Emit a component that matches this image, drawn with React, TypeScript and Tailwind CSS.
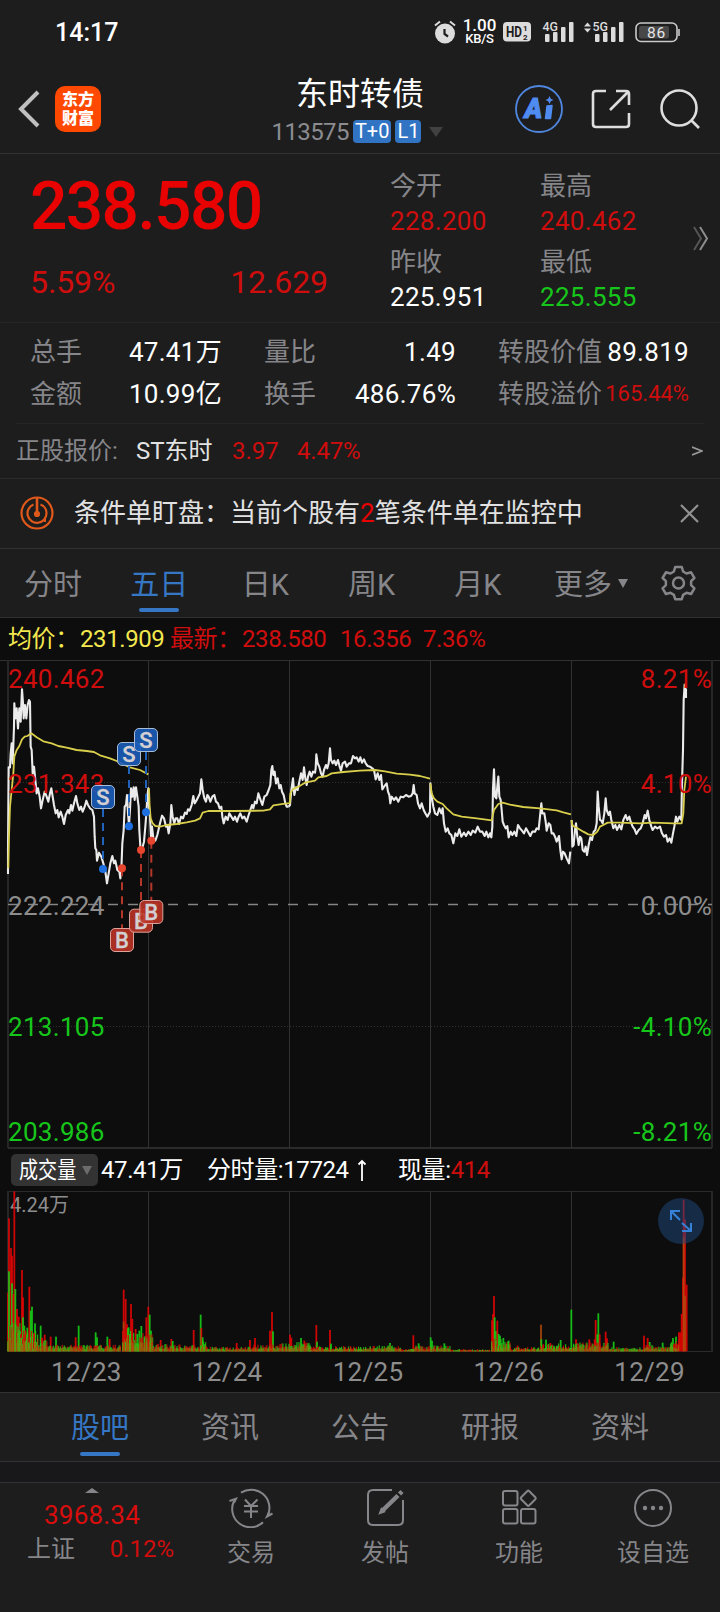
import React from "react";

/* ─────────────────────────────────────────
   Data
───────────────────────────────────────── */
type Line = { tx: number; ty: number; points: string };

// Traced in third-pixel units, each run has its own origin on the chart
const priceLines: Line[] = [
    {
        tx: 0,
        ty: -10,
        points:
            "24,672 24,600 26,352 30,352 32,310 35,280 38,340 42,230 43,160 46,205 50,175 54,235 58,175 62,215 66,118 69,160 71,205 75,165 79,205 83,165 87,150 90,155 92,290 95,300 98,370 102,350 106,390 110,430 114,415 119,440 123,475 128,450 134,425 140,440 145,455 150,430 154,415 158,440 162,465 167,490 172,480 176,502 182,485 187,500 192,522 197,495 204,480 208,490 213,465 217,482 222,460 228,438 232,460 238,480 243,470 248,485 254,470 259,452 264,465 270,475 277,480 282,500 284,560 286,595 289,600 291,632 297,608 304,620 310,640 316,665 321,700 326,670 331,640 337,618 342,640 346,632 352,660 358,665 361,685 364,660 367,580 371,540 374,470 378,465 381,435 384,490 387,525 390,480 393,415 397,440 401,412 404,450 408,412 412,440 416,470 418,540 421,590 424,600 428,590 432,575 436,530 439,490 442,440 445,415 447,470 450,500 453,560 456,530 460,565 466,572 472,555 480,520 486,497 492,505 498,530 502,525 506,550 511,520 514,465 518,500 523,520 527,505 532,505 537,522 543,500 549,505 555,488 560,492 564,478 569,482 575,465 580,438 584,460 589,452 595,440 600,430 604,388 608,420 613,445 618,455 622,435 626,440 631,455 637,440 643,435 648,455 654,460 659,475 664,470 667,500 671,520 677,500 683,510 688,490 694,500 700,510 705,500 711,515 716,500 721,490 727,505 733,500 740,515 745,498 751,480 756,465 760,475 765,455 770,460 775,430 780,445 787,465 793,440 800,435 806,420 811,405 814,360 817,348 820,375 824,365 828,400 833,385 838,415 842,405 846,425 851,435 856,460 860,470 866,470",
    },
    {
        tx: 280,
        ty: 40,
        points:
            "26,320 30,315 34,270 39,235 43,285 48,262 53,270 58,245 63,220 68,240 72,202 76,235 80,255 84,230 89,215 94,230 99,215 105,218 107,205 109,163 113,190 118,200 123,220 128,230 132,210 138,195 142,205 146,190 150,145 153,180 158,190 163,182 168,195 174,180 179,200 183,212 188,190 195,185 200,200 207,190 213,190 219,168 225,175 230,172 236,185 241,172 246,188 252,178 257,190 263,198 270,200 277,205 282,210 287,238 293,220 298,240 303,225 307,268 312,260 320,250 324,275 328,285 331,310 335,290 342,300 348,292 355,305 362,290 370,292 378,285 386,290 393,288 398,280 401,255 404,280 410,285 414,310 420,325 425,310 431,330 436,340 442,350 450,335 451,250 455,290 460,320 465,340 472,345 478,325 484,340 488,325 492,370 497,395 503,385 508,400 514,405 520,430 526,400 532,408 538,388 544,410 552,398 558,408 565,395 572,405 578,392 586,398 593,380 600,395 607,395 614,408 619,395 625,412 630,400 634,412 637,380 639,265 642,208 645,290 649,295 652,260 655,230 658,290 662,300 665,330 668,365 672,375 677,385 682,378 686,412 692,395 697,405 703,395 709,408 714,375 720,385 726,392 732,400 738,385 744,395 751,408 757,395 765,395 770,385 776,388 780,350 784,310 787,340 793,340 797,365 800,392 806,370 811,375 815,400 820,400 825,410 830,425 837,408 841,450 845,478 849,455 854,460 860,475 867,490 871,455",
    },
    {
        tx: 540,
        ty: -10,
        points:
            "95,510 97,590 101,585 105,540 108,520 112,560 116,585 120,560 124,565 128,600 133,605 137,590 141,615 146,585 151,562 156,570 161,545 166,540 170,520 173,425 176,470 180,510 184,512 188,520 193,490 197,445 200,480 206,495 210,485 214,510 220,535 226,525 231,540 238,525 244,538 250,510 257,495 262,510 268,500 272,515 278,530 284,538 289,552 296,540 302,535 308,520 314,495 318,505 323,482 328,510 334,530 338,540 345,530 352,535 360,530 366,550 372,560 378,555 383,575 389,565 394,578 399,550 403,530 408,500 412,515 418,500 424,510 426,400 429,300 431,150 434,104 436,140 438,118 438,144",
    },
];

const averageLines: Line[] = [
    { tx: 0, ty: -10, points: "25,655 27,560 30,470 35,420 40,370 43,320 50,300 58,288 66,268 74,260 82,258 94,250 110,262 130,274 155,280 175,288 200,293 230,300 260,303 282,306 300,316 330,325 350,333 390,352 420,360 445,373" },
    { tx: 0, ty: -10, points: "447,415 449,470 452,505 458,520 466,528 480,530 500,525 530,522 560,517 585,512 600,505 608,488 625,483 700,483 790,482 810,478 820,466 855,461 868,460" },
    { tx: 280, ty: 40, points: "29,312 31,280 38,268 55,260 75,248 90,245 105,242 115,232 140,228 155,220 190,216 240,212 285,210 315,214 350,221 390,224 420,228 450,236" },
    { tx: 280, ty: 40, points: "451,250 455,280 462,295 472,305 488,312 500,325 520,343 545,350 590,355 635,361 642,330 655,312 668,308 690,314 730,321 780,325 830,331 850,337 873,343" },
    { tx: 540, ty: -10, points: "94,510 96,522 99,528 110,533 130,545 145,553 160,555 172,545 180,530 190,525 203,518 240,518 300,520 340,518 400,520 425,520 430,490 433,420 438,380" },
];

// [x, top, color] in third-pixel units, baseline at 481
const volumeSpikes: [number, number, "r" | "g" | "m"][] = [
    [24, 305, "r"], [27, 82, "r"], [33, 171, "r"], [36, 194, "r"], [27, 241, "g"], [36, 277, "g"], [40, 310, "r"], [43, 1, "r"], [46, 294, "g"], [51, 354, "r"], [56, 377, "r"], [60, 421, "g"], [66, 237, "r"], [69, 319, "r"], [69, 379, "g"], [73, 404, "g"], [79, 425, "r"], [82, 410, "g"], [88, 287, "r"], [92, 359, "g"], [96, 347, "g"], [101, 427, "r"], [105, 397, "g"], [122, 404, "g"], [126, 440, "r"], [134, 431, "r"], [152, 437, "r"], [168, 437, "g"], [227, 439, "r"], [236, 404, "g"], [287, 424, "g"], [291, 439, "g"], [322, 437, "g"], [329, 444, "r"],
    [371, 296, "r"], [377, 324, "r"], [371, 392, "m"], [381, 400, "r"], [386, 409, "g"], [393, 339, "r"], [397, 384, "r"], [393, 430, "g"], [407, 414, "r"], [412, 429, "g"], [418, 419, "g"], [424, 405, "g"], [433, 439, "g"], [439, 379, "r"], [445, 347, "r"], [449, 371, "g"], [453, 419, "g"], [457, 439, "g"], [482, 447, "r"], [514, 444, "r"], [518, 450, "g"], [581, 417, "r"], [602, 371, "g"], [604, 411, "r"], [608, 439, "g"], [710, 456, "r"], [750, 447, "r"], [765, 441, "r"], [810, 419, "r"], [816, 363, "r"], [819, 421, "g"], [870, 431, "r"], [874, 440, "r"], [903, 441, "g"], [913, 449, "r"], [949, 402, "r"], [951, 452, "g"], [990, 417, "r"], [993, 458, "g"],
    [1170, 456, "g"], [1240, 433, "r"], [1256, 457, "g"], [1292, 439, "g"], [1296, 449, "g"], [1333, 457, "g"], [1476, 388, "r"], [1479, 369, "r"], [1482, 315, "r"], [1484, 379, "g"], [1488, 420, "g"], [1492, 389, "r"], [1496, 429, "g"], [1500, 434, "g"], [1510, 441, "g"], [1526, 449, "g"], [1553, 464, "r"], [1623, 401, "m"], [1624, 445, "g"], [1638, 446, "g"], [1651, 456, "r"], [1682, 447, "g"], [1714, 356, "g"], [1728, 445, "r"], [1768, 445, "r"], [1784, 445, "r"], [1787, 387, "r"], [1792, 430, "g"], [1795, 367, "g"], [1799, 430, "r"], [1817, 422, "r"], [1821, 442, "r"], [1841, 452, "g"], [1932, 434, "r"], [1943, 441, "r"], [1949, 453, "g"], [1988, 455, "g"], [2019, 441, "g"], [2028, 437, "g"], [2037, 424, "r"], [2041, 424, "r"], [2045, 369, "r"], [2049, 260, "r"], [2051, 26, "r"], [2055, 86, "r"], [2060, 281, "r"], [2051, 139, "m"], [2055, 314, "m"],
];

// [from x, to x, typical height] of the low volume between the spikes
const volumeFloor: [number, number, number][] = [
    [22, 60, 90], [60, 112, 66], [112, 140, 36], [140, 360, 20], [366, 400, 76], [400, 455, 56], [455, 475, 34], [475, 600, 22], [600, 620, 36], [620, 760, 14], [760, 880, 24], [880, 930, 28], [930, 1100, 16], [1100, 1200, 18], [1200, 1240, 8], [1240, 1350, 18], [1350, 1470, 7], [1474, 1530, 38], [1530, 1620, 13], [1620, 1720, 24], [1720, 1825, 28], [1825, 1930, 13], [1930, 1960, 22], [1960, 2010, 14], [2010, 2036, 30],
];

const VOLUME_COLORS = { r: "#e30404", g: "#16cc16", m: "#b0480c" };

function buildFloor() {
    const bars: { x: number; h: number; color: string }[] = [];
    let seed = 7;
    const rand = () => {
        seed = (seed * 16807) % 2147483647;
        return seed / 2147483647;
    };
    volumeFloor.forEach(([from, to, level]) => {
        for (let x = from; x < to; x += 3) {
            const tall = level * (0.35 + rand() * 0.65);
            const short = tall * (0.3 + rand() * 0.5);
            bars.push({ x, h: tall, color: rand() > 0.5 ? "#cf0e06" : "#24c914" });
            bars.push({ x, h: short, color: rand() > 0.4 ? "#a8580a" : "#6f940e" });
        }
    });
    return bars;
}

const floorBars = buildFloor();

const dayLines = [148.5, 289.5, 430.5, 571.5];

const markers = [
    { type: "S", x: 103, y: 137, dot: 209 },
    { type: "S", x: 129, y: 94, dot: 166.3 },
    { type: "S", x: 146, y: 80, dot: 152.3 },
    { type: "B", x: 122, y: 280, dot: 208.3 },
    { type: "B", x: 141, y: 260.7, dot: 190 },
    { type: "B", x: 151.3, y: 252, dot: 180.7 },
];

/* ─────────────────────────────────────────
   Status bar
───────────────────────────────────────── */
function Signal({ label, arrows }: { label: string; arrows?: boolean }) {
    return (
        <svg width="42" height="24" viewBox="0 0 42 24" fill="#dcdcdc">
            {arrows && <path d="M0 6.500 3.500 2.500 7 6.500zM0 8.500 3.500 12.500 7 8.500z" />}
            <text x="8.5" y="11" fontSize="13.5" fontWeight="500" textLength="15.5" lengthAdjust="spacingAndGlyphs">{label}</text>
            <rect x="11" y="14" width="4.5" height="8" rx="1" />
            <rect x="19" y="12" width="4.5" height="10" rx="1" />
            <rect x="27" y="7" width="4.5" height="15" rx="1" />
            <rect x="35" y="2" width="4.5" height="20" rx="1" />
        </svg>
    );
}

function StatusBar() {
    return (
        <div className="flex h-16 items-center pl-[55px] pr-[39px] text-white">
            <span className="pt-px text-[25px] font-medium leading-none">14:17</span>
            <div className="ml-auto flex items-center">
                <svg width="22" height="24" viewBox="0 0 22 24" fill="none">
                    <circle cx="11" cy="13.5" r="10" fill="#dcdcdc" />
                    <path d="M1 5.500 6 1.500M21 5.500 16 1.500" stroke="#dcdcdc" strokeWidth="2" />
                    <path d="M10.500 9v5l3.500 2.500" stroke="#1d1d1d" strokeWidth="2.2" />
                </svg>
                <div className="ml-[7px] flex w-[33px] flex-col items-center">
                    <span className="text-[17px] font-medium leading-[13px]">1.00</span>
                    <span className="text-[13px] font-medium leading-[13px] tracking-[-0.2px]">KB/S</span>
                </div>
                <svg className="ml-[7px]" width="28" height="20" viewBox="0 0 28 20">
                    <rect width="28" height="19.5" rx="4" fill="#dcdcdc" />
                    <text x="3" y="15" fontSize="14.5" fontWeight="700" fill="#1d1d1d" textLength="16" lengthAdjust="spacingAndGlyphs">HD</text>
                    <text x="20" y="8.5" fontSize="8" fontWeight="700" fill="#1d1d1d">1</text>
                    <text x="20" y="17.8" fontSize="8" fontWeight="700" fill="#1d1d1d">2</text>
                </svg>
                <div className="ml-[3px]"><Signal label="4G" /></div>
                <div className="ml-2"><Signal label="5G" arrows /></div>
                <svg className="ml-[9px]" width="46" height="21" viewBox="0 0 46 21" fill="none">
                    <rect x="1" y="1" width="41" height="18.5" rx="5" stroke="#c9c9c9" strokeWidth="1.6" />
                    <rect x="4" y="4" width="30" height="12.5" rx="2" fill="#484848" />
                    <path d="M44 7v7" stroke="#c9c9c9" strokeWidth="1.6" />
                    <text x="21.5" y="15.7" fontSize="15.5" fill="#e6e6e6" textAnchor="middle" letterSpacing="0.8">86</text>
                </svg>
            </div>
        </div>
    );
}

/* ─────────────────────────────────────────
   Title bar
───────────────────────────────────────── */
function Header() {
    return (
        <div className="grid h-[90px] grid-cols-[1fr_auto_1fr] items-center border-b border-[#333] pt-px">
            <div className="flex items-center pl-[18px]">
                <svg width="22" height="38" viewBox="0 0 22 38" fill="none" stroke="#c0c0c0" strokeWidth="4">
                    <path d="M20 2 3 19l17 17" />
                </svg>
                <div className="ml-[15px] flex size-[46px] flex-col items-center justify-center rounded-[10px] bg-[#ff4800] text-[16px] font-black leading-[19px] text-white">
                    <span>东方</span>
                    <span>财富</span>
                </div>
            </div>
            <div className="flex flex-col items-center pt-[5px]">
                <div className="text-[32px] leading-[40px] text-white">东时转债</div>
                <div className="flex items-center pr-[5px]">
                    <span className="text-[24px] leading-[36px] tracking-[-0.6px] text-[#8c8c90]">113575</span>
                    <span className="ml-1 rounded-[4px] bg-[#3274c4] px-[2px] text-[20px] leading-[23px] text-white">T+0</span>
                    <span className="ml-1 rounded-[4px] bg-[#3274c4] px-[2px] text-[20px] leading-[23px] text-white">L1</span>
                    <svg className="ml-2" width="14" height="10" viewBox="0 0 14 10"><path d="M0 0h14L7 10z" fill="#414141" /></svg>
                </div>
            </div>
            <div className="flex items-center justify-end pr-5">
                <svg width="48" height="48" viewBox="0 0 48 48" fill="none">
                    <circle cx="24" cy="24" r="23" stroke="#4f87e0" strokeWidth="1.8" />
                    <text x="9.5" y="33" fontSize="27" fontWeight="900" fontStyle="italic" fill="#4f8bf0" stroke="#4f8bf0">A</text>
                    <path d="m32 21 5-.5-1.500 13h-5z" fill="#4f8bf0" stroke="#4f8bf0" strokeWidth="1.5" strokeLinejoin="round" />
                    <path d="m34.500 11 1.300 2.700 2.700 1.300-2.700 1.300-1.300 2.700-1.300-2.700-2.700-1.300 2.700-1.300z" fill="#4f8bf0" />
                </svg>
                <svg className="ml-7" width="40" height="40" viewBox="0 0 40 40" fill="none" stroke="#dedede" strokeWidth="2.6">
                    <path d="M15 2H5Q2 2 2 5v30q0 3 3 3h30q3 0 3-3V24M25 2h10q3 0 3 3v11M37 3 19 21" />
                </svg>
                <svg className="ml-[29px]" width="40" height="40" viewBox="0 0 40 40" fill="none" stroke="#dedede" strokeWidth="2.6">
                    <circle cx="19" cy="19" r="17.5" />
                    <path d="m31 31 8 8" />
                </svg>
            </div>
        </div>
    );
}

/* ─────────────────────────────────────────
   Quote
───────────────────────────────────────── */
function QuoteCell({ label, value, color }: { label: string; value: string; color: string }) {
    return (
        <div className="h-[76px] w-[150px]">
            <div className="text-[26px] leading-[35px] text-[#86868a]">{label}</div>
            <div className={`text-[26px] leading-[34px] tracking-[0.3px] ${color}`}>{value}</div>
        </div>
    );
}

function Quote() {
    return (
        <div className="flex h-[169px] border-b border-[#252527]">
            <div className="flex w-[328px] flex-col pl-[30px] text-[#e80202]">
                <div className="pt-[15px] text-[66px] font-medium leading-[76px] tracking-[-1.7px]">238.580</div>
                <div className="flex justify-between pt-[17px] text-[32px] leading-[40px] tracking-[-0.1px] text-[#cf0d0d]">
                    <span>5.59%</span>
                    <span>12.629</span>
                </div>
            </div>
            <div className="ml-[62px] grid grid-cols-[150px_150px] content-start pt-[15px]">
                <QuoteCell label="今开" value="228.200" color="text-[#cf0d0d]" />
                <QuoteCell label="最高" value="240.462" color="text-[#cf0d0d]" />
                <QuoteCell label="昨收" value="225.951" color="text-white" />
                <QuoteCell label="最低" value="225.555" color="text-[#17c61b]" />
            </div>
            <svg className="ml-[2px] mt-[72px]" width="17" height="25" viewBox="0 0 17 25" fill="none" strokeWidth="2">
                <path d="m2 1 7 11.500L2 24" stroke="#555" />
                <path d="m8 1 7 11.500L8 24" stroke="#8c8c8c" />
            </svg>
        </div>
    );
}

function Stat({ label, value, className, valueClass }: { label: string; value: string; className: string; valueClass?: string }) {
    return (
        <div className={`flex items-center justify-between ${className}`}>
            <span className="text-[#86868a]">{label}</span>
            <span className={valueClass || "tracking-[0.3px] text-white"}>{value}</span>
        </div>
    );
}

function Stats() {
    return (
        <div className="flex h-[100px] flex-col pl-[30px] pt-2 text-[26px] leading-[42px]">
            <div className="flex">
                <Stat className="w-[192px]" label="总手" value="47.41万" />
                <Stat className="ml-[42px] w-[192px]" label="量比" value="1.49" />
                <Stat className="ml-[42px] w-[191px]" label="转股价值" value="89.819" />
            </div>
            <div className="flex">
                <Stat className="w-[192px]" label="金额" value="10.99亿" />
                <Stat className="ml-[42px] w-[192px]" label="换手" value="486.76%" />
                <Stat className="ml-[42px] w-[191px]" label="转股溢价" value="165.44%" valueClass="text-[22px] text-[#cf0d0d]" />
            </div>
        </div>
    );
}

function Underlying() {
    return (
        <div className="border-b border-[#2a2a2c]">
            <div className="mx-4 flex h-[55px] items-center border-t border-[#252527] pb-px text-[24px] leading-none">
                <span className="w-[120px] text-[#86868a]">正股报价:</span>
                <span className="w-[96px] text-[#e2e2e2]">ST东时</span>
                <span className="w-[65px] text-[#cf0d0d]">3.97</span>
                <span className="tracking-[-0.2px] text-[#cf0d0d]">4.47%</span>
                <svg className="ml-auto mr-[1px]" width="11" height="10" viewBox="0 0 11 10" fill="none" stroke="#999" strokeWidth="1.8">
                    <path d="m0 1 10 4-10 4" />
                </svg>
            </div>
        </div>
    );
}

function Alert() {
    return (
        <div className="flex h-[70px] items-center border-b border-[#313133] pb-px pl-5 pr-[21px]">
            <svg width="34" height="34" viewBox="0 0 34 34" fill="none" stroke="#e0591a" strokeWidth="2.2">
                <circle cx="17" cy="17" r="15.5" />
                <path d="M13.500 8.500A9.500 9.500 0 1 0 26.500 17.500 9 9 0 0 0 20.500 8.500" />
                <path d="M17 2v15" strokeWidth="2.6" />
                <circle cx="17" cy="18" r="2" fill="#e0591a" />
                <path d="M24 24.500h2" strokeWidth="3" />
            </svg>
            <span className="ml-5 text-[26px] leading-none text-[#e2e2e2]">
                条件单盯盘：当前个股有<span className="text-[#e80202]">2</span>笔条件单在监控中
            </span>
            <svg className="ml-auto" width="19" height="19" viewBox="0 0 19 19" stroke="#919191" strokeWidth="2.2">
                <path d="m1 1 17 17M18 1 1 18" />
            </svg>
        </div>
    );
}

/* ─────────────────────────────────────────
   Chart period tabs
───────────────────────────────────────── */
function PeriodTabs() {
    return (
        <div className="flex h-[69px] items-center border-b border-[#313133] text-[29px] leading-[72px] text-[#86868a]">
            {["分时", "五日", "日K", "周K", "月K"].map((tab) => (
                <div key={tab} className={`relative h-[69px] w-[106.2px] text-center ${tab === "五日" ? "text-[#3577c4]" : ""}`}>
                    {tab}
                    {tab === "五日" && <span className="absolute bottom-[6px] left-[33px] h-1 w-10 rounded-full bg-[#3577c4]" />}
                </div>
            ))}
            <span className="ml-[23px] pt-[3px]">更多</span>
            <svg className="ml-[6px] mr-auto" width="10" height="9" viewBox="0 0 10 9"><path d="M0 0h10L5 9z" fill="#86868a" /></svg>
            <svg className="mr-6" width="35" height="36" viewBox="0 0 35 36" fill="none" stroke="#86868a" strokeWidth="2.5" strokeLinejoin="round">
                <path d="M14.200 2h6.600l1.300 4.500 3.400 2 4.600-1.200 3.300 5.700-3.300 3.200v3.900l3.300 3.200-3.300 5.700-4.600-1.200-3.400 2-1.300 4.400h-6.600l-1.300-4.400-3.400-2L4.900 29l-3.300-5.700 3.300-3.200v-3.900L1.600 13l3.300-5.700 4.600 1.200 3.400-2z" />
                <circle cx="17.5" cy="18" r="5.5" />
            </svg>
        </div>
    );
}

function PriceLegend() {
    return (
        <div className="flex h-[42px] items-center whitespace-pre pl-2 text-[24px] leading-none tracking-[-0.4px] text-[#cf0d0d]">
            <span className="w-[72px] text-[#f3e84e]">均价：</span>
            <span className="w-[90px] text-[#f3e84e]">231.909</span>
            <span className="w-[72px]">最新：</span>
            <span className="w-[98px]">238.580</span>
            <span className="w-[83px]">16.356</span>
            <span>7.36%</span>
        </div>
    );
}

/* ─────────────────────────────────────────
   Price chart
───────────────────────────────────────── */
function ChartLine({ line, color, width }: { line: Line; color: string; width: number }) {
    return (
        <polyline
            points={line.points}
            transform={`translate(${line.tx} ${line.ty}) scale(0.33333)`}
            fill="none"
            stroke={color}
            strokeWidth={width}
            strokeLinejoin="round"
        />
    );
}

function PriceChart() {
    return (
        <svg className="block" width="720" height="489" viewBox="0 0 720 489">
            <g stroke="#313131" strokeWidth="1" shapeRendering="crispEdges">
                <path d="M0 .5H720" />
                <path d="M8 0V488M712 0V488" strokeWidth="2" stroke="#262626" />
                <path d="M8 488H712" strokeWidth="2" stroke="#2b2b2b" />
                {dayLines.map((x) => <path key={x} d={`M${x} 1V488`} />)}
                <path d="M8 122.500H712M8 366.500H712" strokeDasharray="1 2" />
            </g>
            <path d="M8 244.500H712" stroke="#858585" strokeWidth="1.7" strokeDasharray="10 10" />
            {priceLines.map((line, i) => <ChartLine key={i} line={line} color="#ebebeb" width={6.3} />)}
            {averageLines.map((line, i) => <ChartLine key={i} line={line} color="#d9cf4c" width={5.4} />)}
            <g fontSize="26" letterSpacing="0.3">
                <g fill="#cf0d0d">
                    <text x="8" y="28">240.462</text>
                    <text x="8" y="133">231.343</text>
                    <text x="712" y="28" textAnchor="end">8.21%</text>
                    <text x="712" y="133" textAnchor="end">4.10%</text>
                </g>
                <g fill="#8d8d8d">
                    <text x="8" y="255">222.224</text>
                    <text x="712" y="255" textAnchor="end">0.00%</text>
                </g>
                <g fill="#17c61b">
                    <text x="8" y="376">213.105</text>
                    <text x="8" y="481">203.986</text>
                    <text x="712" y="376" textAnchor="end">-4.10%</text>
                    <text x="712" y="481" textAnchor="end">-8.21%</text>
                </g>
            </g>
            {markers.map((m) => {
                const sell = m.type === "S";
                return (
                    <g key={m.x}>
                        <path
                            d={sell ? `M${m.x} ${m.y + 12}V${m.dot}` : `M${m.x} ${m.dot}V${m.y - 12}`}
                            stroke={sell ? "#1f63bd" : "#b33628"}
                            strokeWidth="2"
                            strokeDasharray="8 6"
                        />
                        <circle cx={m.x} cy={m.dot} r="4" fill={sell ? "#1e6fe0" : "#e8452f"} />
                        <rect x={m.x - 11.5} y={m.y - 11.5} width="23" height="23" rx="4.5" fill={sell ? "#1a5cb8" : "#b93325"} fillOpacity="0.9" stroke={sell ? "#a9bcd6" : "#dca39c"} strokeWidth="1" />
                        <text x={m.x} y={m.y + 7.8} fontSize="22" fontWeight="500" fill="#d3cfd2" stroke="#d3cfd2" strokeWidth="0.3" textAnchor="middle">{m.type}</text>
                    </g>
                );
            })}
        </svg>
    );
}

/* ─────────────────────────────────────────
   Volume
───────────────────────────────────────── */
function VolumeLegend() {
    return (
        <div className="flex h-[42px] items-center pl-[11px] text-[24px] leading-none tracking-[-0.4px] text-white">
            <div className="flex h-8 w-[87px] items-center rounded-[5px] bg-[#333] pl-2 tracking-normal">
                <span className="w-[59px] origin-left scale-x-[0.83] whitespace-nowrap text-[23px]">成交量</span>
                <svg className="ml-1" width="10" height="9" viewBox="0 0 10 9"><path d="M0 0h10L5 9z" fill="#6c6c6c" /></svg>
            </div>
            <span className="ml-[3px] w-[106px]">47.41万</span>
            <span className="w-[150px]">分时量:17724</span>
            <svg width="10" height="22" viewBox="0 0 10 22" fill="none" stroke="#fff" strokeWidth="1.8">
                <path d="M5 22V2M1.500 5.500 5 2l3.500 3.500" />
            </svg>
            <span className="ml-[31px]">现量:<span className="text-[#cf0d0d]">414</span></span>
        </div>
    );
}

function VolumeChart() {
    return (
        <div className="relative">
            <svg className="block" width="720" height="161" viewBox="0 0 720 161">
                <g stroke="#313131" strokeWidth="1" shapeRendering="crispEdges">
                    <path d="M8 .5H712M8 160.500H712" stroke="#2b2b2b" />
                    <path d="M8 0V161M712 0V161" strokeWidth="2" stroke="#262626" />
                    {dayLines.map((x) => <path key={x} d={`M${x} 0V161`} />)}
                </g>
                <text x="10" y="20.5" fontSize="20" fill="#8d8d8d">4.24万</text>
                <g transform="scale(0.33333)">
                    {volumeSpikes.map(([x, top, c], i) => (
                        <rect key={i} x={x - 2.7} y={top} width="5.4" height={481 - top} fill={VOLUME_COLORS[c]} fillOpacity="0.9" />
                    ))}
                    {floorBars.map((b, i) => (
                        <rect key={i} x={b.x} y={481 - b.h} width="3.6" height={b.h} fill={b.color} fillOpacity="0.85" />
                    ))}
                </g>
            </svg>
            <div className="absolute left-[658px] top-[7px] flex size-[46px] items-center justify-center rounded-full bg-[#1d4a80]/50">
                <svg width="24" height="24" viewBox="0 0 24 24" fill="none" stroke="#3681d6" strokeWidth="2">
                    <path d="M2 11V2h9M2.500 2.500 11 11M22 14v8h-9M21.500 21.500 13 14" />
                </svg>
            </div>
        </div>
    );
}

/* ─────────────────────────────────────────
   Bottom area
───────────────────────────────────────── */
function InfoTabs() {
    return (
        <div className="flex h-[70px] border-y border-[#313133] px-[35px] text-[29px] leading-[71px] text-[#86868a]">
            {["股吧", "资讯", "公告", "研报", "资料"].map((tab) => (
                <div key={tab} className={`relative w-[130px] text-center ${tab === "股吧" ? "text-[#3577c4]" : ""}`}>
                    {tab}
                    {tab === "股吧" && <span className="absolute bottom-[5px] left-[45px] h-1 w-10 rounded-full bg-[#3577c4]" />}
                </div>
            ))}
        </div>
    );
}

const actions = [
    {
        label: "交易",
        icon: (
            <>
                <path d="M12 4.700A18.300 18.300 0 0 1 39 27M34 34.300A18.300 18.300 0 0 1 5 13" />
                <path d="m.500 13 6.500-2.300-2 4M43.500 25.500 38 28.500l2-4" />
                <path d="m16 11.500 6 6.500 6.500-6.500M15 18h14M15 23.500h14M22 18v12" />
            </>
        ),
    },
    {
        label: "发帖",
        icon: (
            <>
                <path d="M29 2H10Q5 2 5 7v25q0 5 5 5h25q5 0 5-5V12" />
                <path d="m19 23 16-15.500M36.500 6l2.500-2.500" strokeWidth="4.5" />
                <path d="m17 25 4-1.500-2.500-2.500z" fill="#86868a" />
            </>
        ),
    },
    {
        label: "功能",
        icon: (
            <>
                <rect x="6" y="3" width="14.5" height="14.5" rx="2" />
                <rect x="6" y="21" width="14.5" height="14.5" rx="2" />
                <rect x="24" y="21" width="14.5" height="14.5" rx="2" />
                <rect x="25.5" y="4.5" width="11.5" height="11.5" rx="1.5" transform="rotate(45 31.250 10.250)" />
            </>
        ),
    },
    {
        label: "设自选",
        icon: (
            <>
                <circle cx="22" cy="20" r="18" />
                <g fill="#86868a" stroke="none">
                    <circle cx="14" cy="20" r="2.2" />
                    <circle cx="22" cy="20" r="2.2" />
                    <circle cx="30" cy="20" r="2.2" />
                </g>
            </>
        ),
    },
];

function BottomBar() {
    return (
        <div className="flex h-[131px] border-t border-[#313133] text-[24px] text-[#86868a]">
            <div className="flex w-[184px] flex-col items-center pt-[5px]">
                <svg width="14" height="5" viewBox="0 0 14 5"><path d="M7 0l7 5H0z" fill="#86868a" /></svg>
                <div className="mt-[5px] text-[26px] leading-[34px] tracking-[0.2px] text-[#d80d0d]">3968.34</div>
                <div className="flex w-full items-center justify-between pl-[27px] pr-[10px] text-[24px] leading-[34px]">
                    <span>上证</span>
                    <span className="text-[#cf0d0d]">0.12%</span>
                </div>
            </div>
            {actions.map((a) => (
                <div key={a.label} className="flex w-[134px] flex-col items-center pt-[5px]">
                    <svg width="44" height="40" viewBox="0 0 44 40" fill="none" stroke="#86868a" strokeWidth="2">{a.icon}</svg>
                    <span className="mt-2 leading-[34px]">{a.label}</span>
                </div>
            ))}
        </div>
    );
}

export default function App() {
    return (
        <div className="h-[1612px] w-[720px] overflow-hidden bg-[#1d1d1d] font-['Roboto','Noto_Sans_CJK_SC',sans-serif]">
            <StatusBar />
            <Header />
            <Quote />
            <Stats />
            <Underlying />
            <Alert />
            <PeriodTabs />
            <div className="bg-[#0d0d0d]">
                <PriceLegend />
                <PriceChart />
                <VolumeLegend />
                <VolumeChart />
                <div className="flex h-10 pl-4 text-[26px] leading-[41px] tracking-[0.3px] text-[#8d8d8d]">
                    {["12/23", "12/24", "12/25", "12/26", "12/29"].map((d) => (
                        <span key={d} className="w-[140.8px] text-center">{d}</span>
                    ))}
                </div>
            </div>
            <InfoTabs />
            <div className="h-5 bg-[#18181a]" />
            <BottomBar />
        </div>
    );
}
